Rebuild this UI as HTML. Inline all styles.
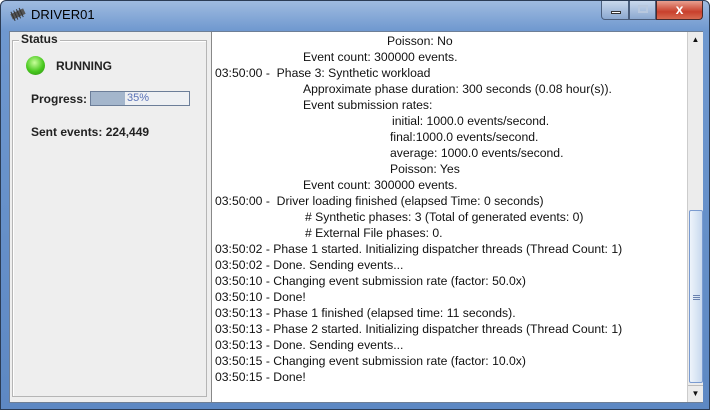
<!DOCTYPE html>
<html><head><style>
*{margin:0;padding:0;box-sizing:border-box}
body{width:710px;height:410px;overflow:hidden;background:#fff;font-family:"Liberation Sans",sans-serif}
.win{position:absolute;left:0;top:0;width:710px;height:410px;background:linear-gradient(180deg,#9fbbe0 0,#6f98cf 30px,#5d88c3 100%);border:1px solid #2b3c55;border-radius:6px 6px 0 0}
.title{position:absolute;left:30px;top:6px;font-size:13px;color:#000}
.content{position:absolute;left:8px;top:30px;width:694px;height:372px;background:#eeeeee;border:1px solid #6e7f96}
.group{position:absolute;left:2px;top:8px;width:195px;height:357px;border:1px solid #b5b5b5;box-shadow:inset 1px 1px 0 #fff}
.lbl{position:absolute;font-size:12px;color:#222}
.ta{position:absolute;left:201px;top:0px;width:476px;height:370px;background:#fff;border-left:1px solid #888}
.ta div{position:absolute;font-size:12.2px;color:#111;white-space:pre;line-height:16px}
.sb{position:absolute;left:677px;top:0;width:16px;height:370px;background:#ececec;border-left:1px solid #ccc}
.thumb{position:absolute;left:1px;top:178px;width:14px;height:173px;background:linear-gradient(90deg,#eef4fb,#c8d9ee);border:1px solid #7a9bd0;border-radius:2px}
</style></head><body>
<div class="win">
<svg style="position:absolute;left:8px;top:6px" width="18" height="14"><g transform="rotate(-25 9 7)"><rect x="2" y="4" width="14" height="6" fill="#555"/><rect x="3" y="2" width="1" height="10" fill="#333"/><rect x="6" y="2" width="1" height="10" fill="#333"/><rect x="9" y="2" width="1" height="10" fill="#333"/><rect x="12" y="2" width="1" height="10" fill="#333"/></g></svg>
<div class="title">DRIVER01</div>
<div style="position:absolute;left:600px;top:0;width:28px;height:19px;background:linear-gradient(#c9d8ec,#8ba8d0);border:1px solid #4a5e7c;border-top:0;border-radius:0 0 0 4px"><div style="position:absolute;left:9px;top:10px;width:10px;height:3px;background:#fff;border:1px solid #333"></div></div>
<div style="position:absolute;left:628px;top:0;width:27px;height:19px;background:linear-gradient(#c9d8ec,#8ba8d0);border:1px solid #4a5e7c;border-top:0"><div style="position:absolute;left:8px;top:4px;width:10px;height:8px;border:2px solid #b8c8de"></div></div>
<div style="position:absolute;left:655px;top:0;width:47px;height:19px;background:linear-gradient(#e8a090,#c8402c 60%,#d86a50);border:1px solid #4a2a2a;border-top:0;border-radius:0 0 4px 0;color:#fff;font-weight:bold;font-size:14px;text-align:center;line-height:17px">x</div>
<div class="content">
<div class="group">
<div class="lbl" style="left:6px;top:-9px;background:#eee;padding:0 2px;font-weight:bold;font-size:12px">Status</div>
<div style="position:absolute;left:13px;top:15px;width:19px;height:19px;border-radius:50%;background:radial-gradient(circle at 45% 35%,#c8ff9a,#48c81e 55%,#2b8a12);"></div>
<div class="lbl" style="left:43px;top:18px;font-weight:bold">RUNNING</div>
<div class="lbl" style="left:18px;top:51px;font-weight:bold">Progress:</div>
<div style="position:absolute;left:77px;top:50px;width:100px;height:15px;border:1px solid #6c7e99;background:#eef0f3"><div style="width:34px;height:13px;background:#a4b6cc"></div><div style="position:absolute;left:36px;top:0;font-size:11px;color:#5a72b8;line-height:13px">35%</div></div>
<div class="lbl" style="left:18px;top:84px;font-weight:bold">Sent events: 224,449</div>
</div>
<div class="ta">
<div style="left:175px;top:1px">Poisson: No</div>
<div style="left:91px;top:17px">Event count: 300000 events.</div>
<div style="left:3px;top:33px">03:50:00 -  Phase 3: Synthetic workload</div>
<div style="left:91px;top:49px">Approximate phase duration: 300 seconds (0.08 hour(s)).</div>
<div style="left:91px;top:65px">Event submission rates:</div>
<div style="left:180px;top:81px">initial: 1000.0 events/second.</div>
<div style="left:178px;top:97px">final:1000.0 events/second.</div>
<div style="left:178px;top:113px">average: 1000.0 events/second.</div>
<div style="left:178px;top:129px">Poisson: Yes</div>
<div style="left:91px;top:145px">Event count: 300000 events.</div>
<div style="left:3px;top:161px">03:50:00 -  Driver loading finished (elapsed Time: 0 seconds)</div>
<div style="left:93px;top:177px"># Synthetic phases: 3 (Total of generated events: 0)</div>
<div style="left:93px;top:193px"># External File phases: 0.</div>
<div style="left:3px;top:209px">03:50:02 - Phase 1 started. Initializing dispatcher threads (Thread Count: 1)</div>
<div style="left:3px;top:225px">03:50:02 - Done. Sending events...</div>
<div style="left:3px;top:241px">03:50:10 - Changing event submission rate (factor: 50.0x)</div>
<div style="left:3px;top:257px">03:50:10 - Done!</div>
<div style="left:3px;top:273px">03:50:13 - Phase 1 finished (elapsed time: 11 seconds).</div>
<div style="left:3px;top:289px">03:50:13 - Phase 2 started. Initializing dispatcher threads (Thread Count: 1)</div>
<div style="left:3px;top:305px">03:50:13 - Done. Sending events...</div>
<div style="left:3px;top:321px">03:50:15 - Changing event submission rate (factor: 10.0x)</div>
<div style="left:3px;top:337px">03:50:15 - Done!</div>
</div>
<div class="sb">
<div style="position:absolute;left:0;top:0;width:15px;height:16px;text-align:center;font-size:8px;line-height:16px;color:#111">▲</div>
<div class="thumb"><div style="position:absolute;left:3px;top:84px;width:7px;height:5px;border-top:1px solid #6a82b0;border-bottom:1px solid #6a82b0"><div style="margin-top:1px;height:1px;background:#6a82b0"></div></div></div>
<div style="position:absolute;left:0;top:353px;width:15px;height:16px;text-align:center;font-size:8px;line-height:16px;color:#111;border-top:1px solid #bbb">▼</div>
</div>
</div>
</div>
</body></html>
